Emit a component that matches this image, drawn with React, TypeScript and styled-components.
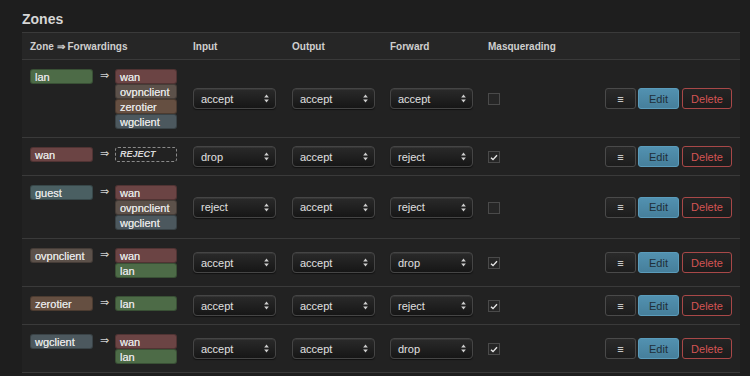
import React from "react";
import styled, { createGlobalStyle } from "styled-components";

const Global = createGlobalStyle`
  html, body { margin: 0; padding: 0; background: #1e1e1e; }
  body { font-family: "Liberation Sans", Arial, sans-serif; color: #d8d8d8; }
`;

const Page = styled.div`
  padding: 12px 10px 0 22px;
`;

const Title = styled.h3`
  margin: 0 0 6px 0;
  font-size: 14px;
  line-height: 14px;
  font-weight: bold;
  color: #d6d6d6;
`;

const Table = styled.table`
  width: 718px;
  border-collapse: collapse;
  background: #222222;
  table-layout: fixed;
`;

const HeadRow = styled.tr`
  background: #262626;
  border-top: 1px solid #3a3a3a;
  border-bottom: 1px solid #3a3a3a;
`;

const Th = styled.th<{ $w?: number }>`
  box-sizing: border-box;
  ${(p) => (p.$w ? `width: ${p.$w}px;` : "")}
  text-align: left;
  font-size: 10px;
  font-weight: bold;
  color: #cfcfcf;
  padding: 0 8px;
  height: 27px;
`;

const Row = styled.tr`
  border-bottom: 1px solid #3a3a3a;
`;

const Td = styled.td<{ $top?: boolean; $right?: boolean }>`
  padding: 8px 8px;
  vertical-align: ${(p) => (p.$top ? "top" : "middle")};
  text-align: ${(p) => (p.$right ? "right" : "left")};
  font-size: 11px;
`;

const ZoneCell = styled.div`
  display: flex;
  align-items: flex-start;
  padding-top: 1px;
`;

const ZONE_COLORS: Record<string, string> = {
  lan: "#4d6b47",
  wan: "#6b4444",
  guest: "#4a5f62",
  ovpnclient: "#5c514a",
  zerotier: "#654f41",
  wgclient: "#4c585e",
};

const Badge = styled.div<{ $c: string }>`
  box-sizing: border-box;
  flex-shrink: 0;
  width: 63px;
  height: 15px;
  line-height: 14px;
  padding: 0 4px;
  border-radius: 3px;
  background: ${(p) => p.$c};
  border: 1px solid rgba(0, 0, 0, 0.25);
  color: #e2e2e2;
  font-size: 11px;
  text-shadow: 0 0 0.5px #e2e2e2;
`;

const FwdBadge = styled(Badge)`
  width: 62px;
`;

const Arrow = styled.span`
  width: 22px;
  text-align: center;
  font-size: 11px;
  line-height: 13px;
  color: #cfcfcf;
`;

const FwdList = styled.div`
  display: flex;
  flex-direction: column;
`;

const Reject = styled.div`
  box-sizing: border-box;
  width: 62px;
  height: 15px;
  line-height: 13px;
  padding: 0 4px;
  border: 1px dashed #8a8a8a;
  border-radius: 3px;
  font-size: 9px;
  font-weight: bold;
  font-style: italic;
  color: #d8d8d8;
`;

const SelectBox = styled.div`
  box-sizing: border-box;
  width: 83px;
  height: 21px;
  display: flex;
  align-items: center;
  justify-content: space-between;
  padding: 0 6px 0 7px;
  border: 1px solid #454545;
  border-radius: 4px;
  background: linear-gradient(#2a2a2a, #161616);
  box-shadow: inset 0 1px 0 rgba(255, 255, 255, 0.06), 0 1px 1px rgba(0, 0, 0, 0.5);
  font-size: 11px;
  color: #e0e0e0;
`;

const Check = styled.span`
  box-sizing: border-box;
  display: inline-flex;
  align-items: center;
  justify-content: center;
  vertical-align: middle;
  width: 12px;
  height: 12px;
  border: 1px solid #4a4a4a;
  background: #262626;
`;

const Actions = styled.div`
  display: flex;
  justify-content: flex-end;
  gap: 2px;
`;

const Btn = styled.button<{ $kind: "menu" | "edit" | "del" }>`
  box-sizing: border-box;
  flex-shrink: 0;
  height: 21px;
  border-radius: 3px;
  font-family: "Liberation Sans", Arial, sans-serif;
  font-size: 11px;
  padding: 0;
  cursor: pointer;
  display: inline-flex;
  align-items: center;
  justify-content: center;
  ${(p) =>
    p.$kind === "menu"
      ? `width: 31px; border: 1px solid #4a4a4a; background: linear-gradient(#2a2a2a, #1d1d1d); color: #e6e6e6;`
      : p.$kind === "edit"
      ? `width: 41px; border: 1px solid #5b9cbb; background: linear-gradient(#5291b0, #467f9b); color: #1f2f38;`
      : `width: 50px; margin-left: 1px; border: 1px solid #a84848; background: linear-gradient(#242424, #1c1c1c); color: #d45454;`}
`;

const Arrows = () => (
  <svg width="5" height="9" viewBox="0 0 5 9">
    <path d="M2.5 0.5 L4.8 3.5 L0.2 3.5 Z" fill="#d0d0d0" />
    <path d="M2.5 8.5 L4.8 5.5 L0.2 5.5 Z" fill="#d0d0d0" />
  </svg>
);

const Select = ({ v }: { v: string }) => (
  <SelectBox>
    <span>{v}</span>
    <Arrows />
  </SelectBox>
);

const Checkbox = ({ on }: { on: boolean }) => (
  <Check>
    {on && (
      <svg width="8" height="7" viewBox="0 0 8 7">
        <path d="M1 3.8 L3 5.6 L7 1.2" stroke="#e8e8e8" strokeWidth="1.4" fill="none" />
      </svg>
    )}
  </Check>
);

type Zone = {
  name: string;
  fwd: string[] | null;
  input: string;
  output: string;
  forward: string;
  masq: boolean;
};

const zones: Zone[] = [
  { name: "lan", fwd: ["wan", "ovpnclient", "zerotier", "wgclient"], input: "accept", output: "accept", forward: "accept", masq: false },
  { name: "wan", fwd: null, input: "drop", output: "accept", forward: "reject", masq: true },
  { name: "guest", fwd: ["wan", "ovpnclient", "wgclient"], input: "reject", output: "accept", forward: "reject", masq: false },
  { name: "ovpnclient", fwd: ["wan", "lan"], input: "accept", output: "accept", forward: "drop", masq: true },
  { name: "zerotier", fwd: ["lan"], input: "accept", output: "accept", forward: "reject", masq: true },
  { name: "wgclient", fwd: ["wan", "lan"], input: "accept", output: "accept", forward: "drop", masq: true },
];

export default function App() {
  return (
    <>
      <Global />
      <Page>
        <Title>Zones</Title>
        <Table>
          <thead>
            <HeadRow>
              <Th $w={163}>Zone ⇒ Forwardings</Th>
              <Th $w={99}>Input</Th>
              <Th $w={98}>Output</Th>
              <Th $w={98}>Forward</Th>
              <Th $w={112}>Masquerading</Th>
              <Th $w={148}></Th>
            </HeadRow>
          </thead>
          <tbody>
            {zones.map((z) => (
              <Row key={z.name}>
                <Td $top>
                  <ZoneCell>
                    <Badge $c={ZONE_COLORS[z.name]}>{z.name}</Badge>
                    <Arrow>⇒</Arrow>
                    <FwdList>
                      {z.fwd ? (
                        z.fwd.map((f) => (
                          <FwdBadge key={f} $c={ZONE_COLORS[f]}>
                            {f}
                          </FwdBadge>
                        ))
                      ) : (
                        <Reject>REJECT</Reject>
                      )}
                    </FwdList>
                  </ZoneCell>
                </Td>
                <Td>
                  <Select v={z.input} />
                </Td>
                <Td>
                  <Select v={z.output} />
                </Td>
                <Td>
                  <Select v={z.forward} />
                </Td>
                <Td>
                  <Checkbox on={z.masq} />
                </Td>
                <Td $right>
                  <Actions>
                    <Btn $kind="menu">≡</Btn>
                    <Btn $kind="edit">Edit</Btn>
                    <Btn $kind="del">Delete</Btn>
                  </Actions>
                </Td>
              </Row>
            ))}
          </tbody>
        </Table>
      </Page>
    </>
  );
}
